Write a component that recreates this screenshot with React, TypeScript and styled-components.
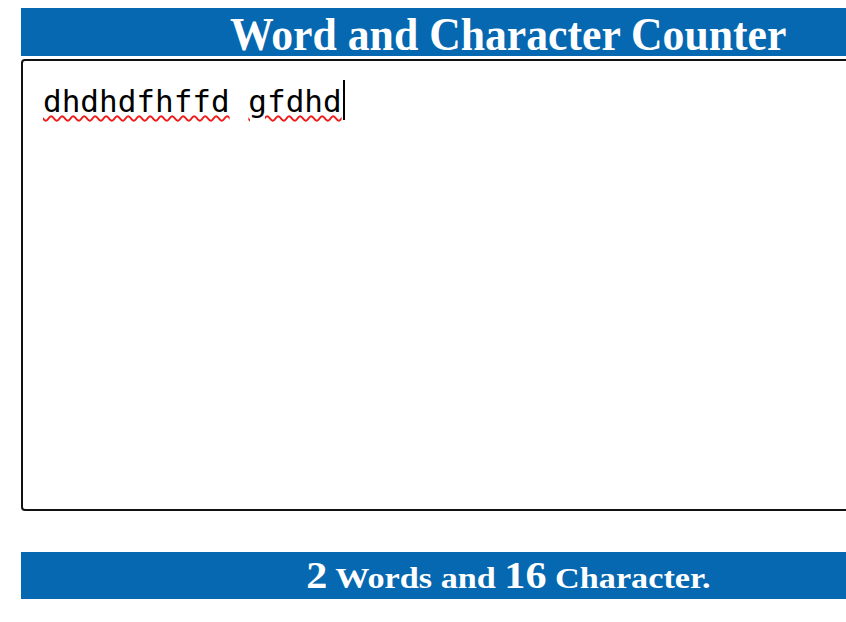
import React from "react";
import styled, { createGlobalStyle } from "styled-components";

const Global = createGlobalStyle`
  html, body {
    margin: 0;
    padding: 0;
    overflow: hidden;
    background: #ffffff;
  }
`;

const Page = styled.div`
  padding: 8px 0 0 21px;
  width: 974px;
  display: flex;
  flex-direction: column;
`;

const Banner = styled.div<{ $h: number; $top?: number }>`
  height: ${(p) => p.$h}px;
  margin-top: ${(p) => p.$top ?? 0}px;
  background: #0568b0;
  color: #ffffff;
  font-family: "Liberation Serif", "Times New Roman", serif;
  font-weight: bold;
  display: flex;
  align-items: center;
  justify-content: center;
  white-space: nowrap;
`;

const Title = styled.h1`
  margin: 0;
  font-size: 47px;
  line-height: 48px;
  font-weight: bold;
  display: inline-block;
  transform: translateY(2px) scaleX(0.93);
`;

const Editor = styled.div`
  margin-top: 3px;
  height: 452px;
  box-sizing: border-box;
  border: 2px solid #111111;
  border-radius: 4px;
  padding: 19px 20px;
  font-family: "DejaVu Sans Mono", "Liberation Mono", monospace;
  font-size: 31px;
  line-height: 42px;
  color: #000000;
  white-space: pre;
`;

const Word = styled.span`
  text-decoration: underline wavy #f01818;
  text-decoration-thickness: 1.5px;
  text-underline-offset: 3px;
`;

const Caret = styled.span`
  display: inline-block;
  width: 2px;
  height: 40px;
  background: #000000;
  vertical-align: -8px;
  margin-left: 1px;
`;

const Result = styled.div`
  font-size: 30px;
  line-height: 47px;
  display: inline-block;
  transform: translateY(1px) scaleX(1.14);
`;

const Num = styled.span`
  font-size: 37px;
`;

export default function App() {
  const text = "dhdhdfhffd gfdhd";
  const words = text.trim().split(/\s+/).filter(Boolean);
  return (
    <>
      <Global />
      <Page>
        <Banner $h={48}>
          <Title>Word and Character Counter</Title>
        </Banner>
        <Editor>
          <Word>{words[0]}</Word> <Word>{words[1]}</Word>
          <Caret />
        </Editor>
        <Banner $h={47} $top={41}>
          <Result>
            <Num>{words.length}</Num> Words and <Num>{text.length}</Num> Character.
          </Result>
        </Banner>
      </Page>
    </>
  );
}
